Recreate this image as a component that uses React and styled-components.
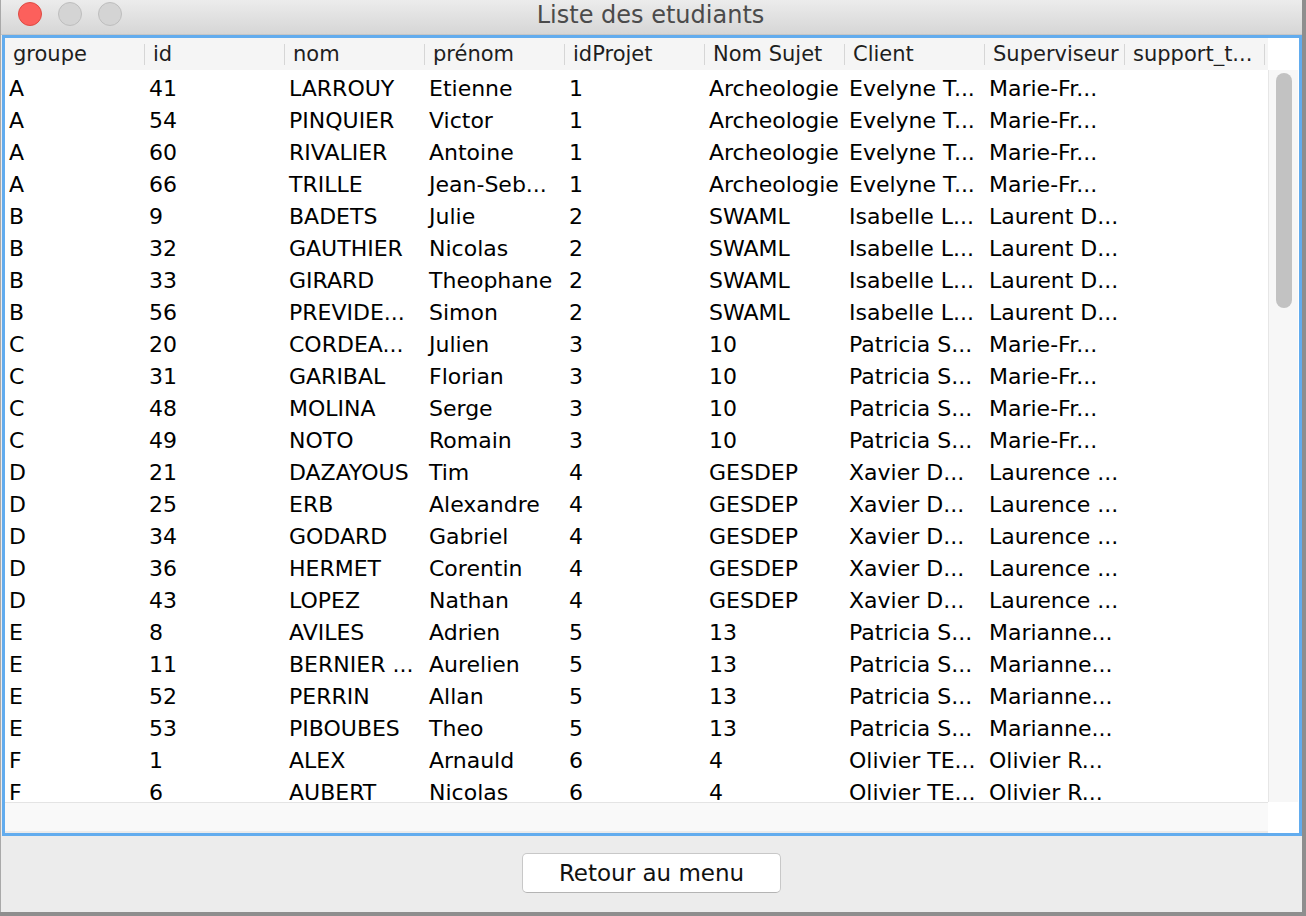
import React from "react";
import styled, { createGlobalStyle } from "styled-components";

// Liste des etudiants - fenetre Swing (JTable dans un JScrollPane)

const GlobalStyle = createGlobalStyle`
  html, body {
    margin: 0;
    padding: 0;
    background: #8e8e8e;
  }
  body {
    font-family: "DejaVu Sans", "Liberation Sans", sans-serif;
  }
`;

const COLUMNS = ["groupe", "id", "nom", "prénom", "idProjet", "Nom Sujet", "Client", "Superviseur", "support_t..."];

const ROWS = [
  ["A", "41", "LARROUY", "Etienne", "1", "Archeologie", "Evelyne T...", "Marie-Fr..."],
  ["A", "54", "PINQUIER", "Victor", "1", "Archeologie", "Evelyne T...", "Marie-Fr..."],
  ["A", "60", "RIVALIER", "Antoine", "1", "Archeologie", "Evelyne T...", "Marie-Fr..."],
  ["A", "66", "TRILLE", "Jean-Seb...", "1", "Archeologie", "Evelyne T...", "Marie-Fr..."],
  ["B", "9", "BADETS", "Julie", "2", "SWAML", "Isabelle L...", "Laurent D..."],
  ["B", "32", "GAUTHIER", "Nicolas", "2", "SWAML", "Isabelle L...", "Laurent D..."],
  ["B", "33", "GIRARD", "Theophane", "2", "SWAML", "Isabelle L...", "Laurent D..."],
  ["B", "56", "PREVIDE...", "Simon", "2", "SWAML", "Isabelle L...", "Laurent D..."],
  ["C", "20", "CORDEA...", "Julien", "3", "10", "Patricia S...", "Marie-Fr..."],
  ["C", "31", "GARIBAL", "Florian", "3", "10", "Patricia S...", "Marie-Fr..."],
  ["C", "48", "MOLINA", "Serge", "3", "10", "Patricia S...", "Marie-Fr..."],
  ["C", "49", "NOTO", "Romain", "3", "10", "Patricia S...", "Marie-Fr..."],
  ["D", "21", "DAZAYOUS", "Tim", "4", "GESDEP", "Xavier D...", "Laurence ..."],
  ["D", "25", "ERB", "Alexandre", "4", "GESDEP", "Xavier D...", "Laurence ..."],
  ["D", "34", "GODARD", "Gabriel", "4", "GESDEP", "Xavier D...", "Laurence ..."],
  ["D", "36", "HERMET", "Corentin", "4", "GESDEP", "Xavier D...", "Laurence ..."],
  ["D", "43", "LOPEZ", "Nathan", "4", "GESDEP", "Xavier D...", "Laurence ..."],
  ["E", "8", "AVILES", "Adrien", "5", "13", "Patricia S...", "Marianne..."],
  ["E", "11", "BERNIER ...", "Aurelien", "5", "13", "Patricia S...", "Marianne..."],
  ["E", "52", "PERRIN", "Allan", "5", "13", "Patricia S...", "Marianne..."],
  ["E", "53", "PIBOUBES", "Theo", "5", "13", "Patricia S...", "Marianne..."],
  ["F", "1", "ALEX", "Arnauld", "6", "4", "Olivier TE...", "Olivier R..."],
  ["F", "6", "AUBERT", "Nicolas", "6", "4", "Olivier TE...", "Olivier R..."],
];

export default function App() {
  return (
    <>
      <GlobalStyle />
      <Window>
        <TitleBar>
          <Lights>
            <Light $color="#fc605c" $border="#de4b43" />
            <Light $color="#d4d4d4" $border="#bebebe" />
            <Light $color="#d4d4d4" $border="#bebebe" />
          </Lights>
          <Title>Liste des etudiants</Title>
          <span />
        </TitleBar>

        <ScrollPane>
          <HeaderRow>
            {COLUMNS.map((col) => (
              <HeaderCell key={col}>
                <HeaderLabel>{col}</HeaderLabel>
                <Divider />
              </HeaderCell>
            ))}
          </HeaderRow>
          <Corner />

          <Body>
            {ROWS.map((row, i) => (
              <Row key={i}>
                {COLUMNS.map((col, j) => (
                  <Cell key={col}>{row[j] || ""}</Cell>
                ))}
              </Row>
            ))}
          </Body>
          <VTrack>
            <Thumb />
          </VTrack>

          <HBar />
          <Corner />
        </ScrollPane>

        <Footer>
          <Button>Retour au menu</Button>
        </Footer>
      </Window>
    </>
  );
}

const Window = styled.div`
  width: 1301px;
  height: 912px;
  border-left: 1px solid #a9a9a9;
  background: #ececec;
  display: flex;
  flex-direction: column;
`;

const TitleBar = styled.div`
  height: 34px;
  flex-shrink: 0;
  border-bottom: 1px solid #c6c6c6;
  background: linear-gradient(#ececec, #d6d6d6);
  display: grid;
  grid-template-columns: 1fr auto 1fr;
  align-items: center;
`;

const Lights = styled.div`
  display: flex;
  gap: 16px;
  padding-left: 17px;
  margin-top: -6px;
`;

const Light = styled.span`
  width: 22px;
  height: 22px;
  border-radius: 50%;
  background: ${(p) => p.$color};
  border: 1px solid ${(p) => p.$border};
`;

const Title = styled.div`
  font-size: 24px;
  color: #4b4b4b;
  margin-top: -5px;
  margin-left: -2px;
`;

const ScrollPane = styled.div`
  margin-left: 1px;
  width: 1294px;
  height: 795px;
  flex-shrink: 0;
  border: 3px solid #62acee;
  background: #ffffff;
  display: grid;
  grid-template-columns: 1263px 1fr;
  grid-template-rows: 32px 1fr 31px;
`;

const HeaderRow = styled.div`
  display: flex;
  background: #f5f5f5;
`;

const HeaderCell = styled.div`
  width: 140px;
  flex-shrink: 0;
  display: flex;
  align-items: center;
  padding-left: 8px;
  box-sizing: border-box;
`;

const HeaderLabel = styled.span`
  flex: 1;
  font-size: 21px;
  color: #1e1e1e;
  white-space: nowrap;
  overflow: hidden;
  margin-top: 0px;
`;

const Divider = styled.span`
  width: 1px;
  height: 21px;
  background: #d6d6d6;
  margin-top: 1px;
`;

const Corner = styled.div`
  background: #ffffff;
`;

const Body = styled.div`
  overflow: hidden;
  padding-top: 2px;
`;

const Row = styled.div`
  display: flex;
  height: 32px;
  align-items: center;
`;

const Cell = styled.div`
  width: 140px;
  flex-shrink: 0;
  box-sizing: border-box;
  padding-left: 4px;
  font-size: 22px;
  color: #000000;
  white-space: nowrap;
  overflow-x: clip;
`;

const VTrack = styled.div`
  border-left: 1px solid #e6e6e6;
  background: #f7f7f7;
  padding: 3px 0 0 7px;
  margin-right: 1px;
`;

const Thumb = styled.div`
  width: 16px;
  height: 235px;
  border-radius: 8px;
  background: #c2c2c2;
`;

const HBar = styled.div`
  background: #f9f9f9;
  border-top: 1px solid #e4e4e4;
  border-bottom: 2px solid #ebebeb;
`;

const Footer = styled.div`
  flex: 1;
  display: flex;
  justify-content: center;
  align-items: flex-start;
  padding-top: 17px;
`;

const Button = styled.button`
  width: 259px;
  height: 40px;
  background: #ffffff;
  border: 1px solid #c8c8c8;
  border-bottom-color: #b4b4b4;
  border-radius: 5px;
  font-family: "DejaVu Sans", "Liberation Sans", sans-serif;
  font-size: 23px;
  color: #111111;
  padding: 0;
`;
